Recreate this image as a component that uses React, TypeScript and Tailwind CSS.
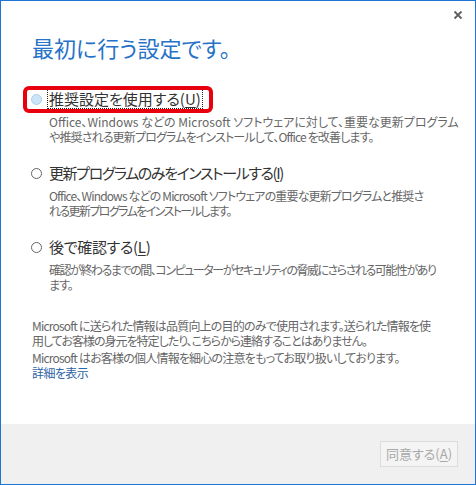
import React from "react";

const font = "[font-family:'Noto_Sans_CJK_JP',sans-serif] [font-feature-settings:'palt']";

function Radio({ checked }: { checked?: boolean }) {
  return checked ? (
    <span className="block w-[11px] h-[11px] rounded-full bg-[#cce4f7] border border-[#a9d0f0] shrink-0" />
  ) : (
    <span className="block w-[11px] h-[11px] rounded-full bg-white border border-[#666666] shrink-0" />
  );
}

export default function App() {
  return (
    <div className={`w-[476px] h-[485px] border border-[#1c74d4] bg-white flex flex-col ${font}`}>
      <div className="flex-1 flex flex-col">
        <div className="flex justify-end pt-[9px] pr-[12px] h-[31px]">
          <svg width="10" height="10" viewBox="0 0 10 10">
            <path d="M1.5 1.5 L8.5 8.5 M8.5 1.5 L1.5 8.5" stroke="#5f5f5f" strokeWidth="1.8" />
          </svg>
        </div>
        <div className="pl-[30px] flex flex-col">
          <h1 className="ml-[1px] text-[22px] leading-[30px] text-[#2672c8] font-normal">最初に行う設定です。</h1>

          <div className="relative mt-[27px] flex items-center h-[20px]">
            <div className="absolute left-[-8px] top-[-3px] w-[190px] h-[27px] border-[4px] border-[#e8000e] rounded-[6px]" />
            <Radio checked />
            <span className="ml-[5px] border border-dotted border-[#222] px-[1px] text-[15px] leading-[18px] text-[#333] whitespace-nowrap">
              推奨設定を使用する(<span className="underline underline-offset-2">U</span>)
            </span>
          </div>
          <p className="mt-[5px] pl-[18px] text-[12px] leading-[15px] text-[#666] whitespace-nowrap">
            <span className="block">Office、Windows などの Microsoft ソフトウェアに対して、重要な更新プログラム</span>
            <span className="block tracking-[-0.85px]">や推奨される更新プログラムをインストールして、Office を改善します。</span>
          </p>

          <div className="mt-[19px] flex items-center h-[20px]">
            <Radio />
            <span className="ml-[5px] px-[2px] text-[15px] leading-[20px] text-[#333] whitespace-nowrap tracking-[-1.4px]">
              更新プログラムのみをインストールする(<span className="underline underline-offset-2">I</span>)
            </span>
          </div>
          <p className="mt-[5px] pl-[18px] text-[12px] leading-[15px] text-[#666] whitespace-nowrap">
            <span className="block tracking-[-0.85px]">Office、Windows などの Microsoft ソフトウェアの重要な更新プログラムと推奨さ</span>
            <span className="block tracking-[-1.6px]">れる更新プログラムをインストールします。</span>
          </p>

          <div className="mt-[19px] flex items-center h-[20px]">
            <Radio />
            <span className="ml-[5px] px-[2px] text-[15px] leading-[20px] text-[#333] whitespace-nowrap tracking-[-0.3px]">
              後で確認する(<span className="underline underline-offset-2">L</span>)
            </span>
          </div>
          <p className="mt-[5px] pl-[18px] text-[12px] leading-[15px] text-[#666] whitespace-nowrap">
            <span className="block tracking-[-1.45px]">確認が終わるまでの間、コンピューターがセキュリティの脅威にさらされる可能性があり</span>
            <span className="block tracking-[-1px]">ます。</span>
          </p>

          <p className="mt-[26px] ml-[1px] text-[12px] leading-[15px] text-[#666] whitespace-nowrap">
            <span className="block tracking-[-0.8px]">Microsoft に送られた情報は品質向上の目的のみで使用されます。送られた情報を使</span>
            <span className="block tracking-[-1px]">用してお客様の身元を特定したり、こちらから連絡することはありません。</span>
          </p>
          <p className="mt-[2px] ml-[1px] text-[12px] leading-[15px] text-[#666] whitespace-nowrap tracking-[-0.8px]">
            Microsoft はお客様の個人情報を細心の注意をもってお取り扱いしております。
          </p>
          <a className="ml-[1px] text-[12px] leading-[15px] text-[#2e64a6] w-fit tracking-[-0.6px]">詳細を表示</a>
        </div>
      </div>
      <div className="h-[60px] bg-[#f0f0f0] flex justify-end items-start pt-[17px] pr-[17px]">
        <button className="w-[78px] h-[26px] border border-[#dcdcdc] bg-[#f4f4f4] text-[13px] text-[#a8a8a8] flex items-center justify-center">
          同意する(<span className="underline underline-offset-2">A</span>)
        </button>
      </div>
    </div>
  );
}
